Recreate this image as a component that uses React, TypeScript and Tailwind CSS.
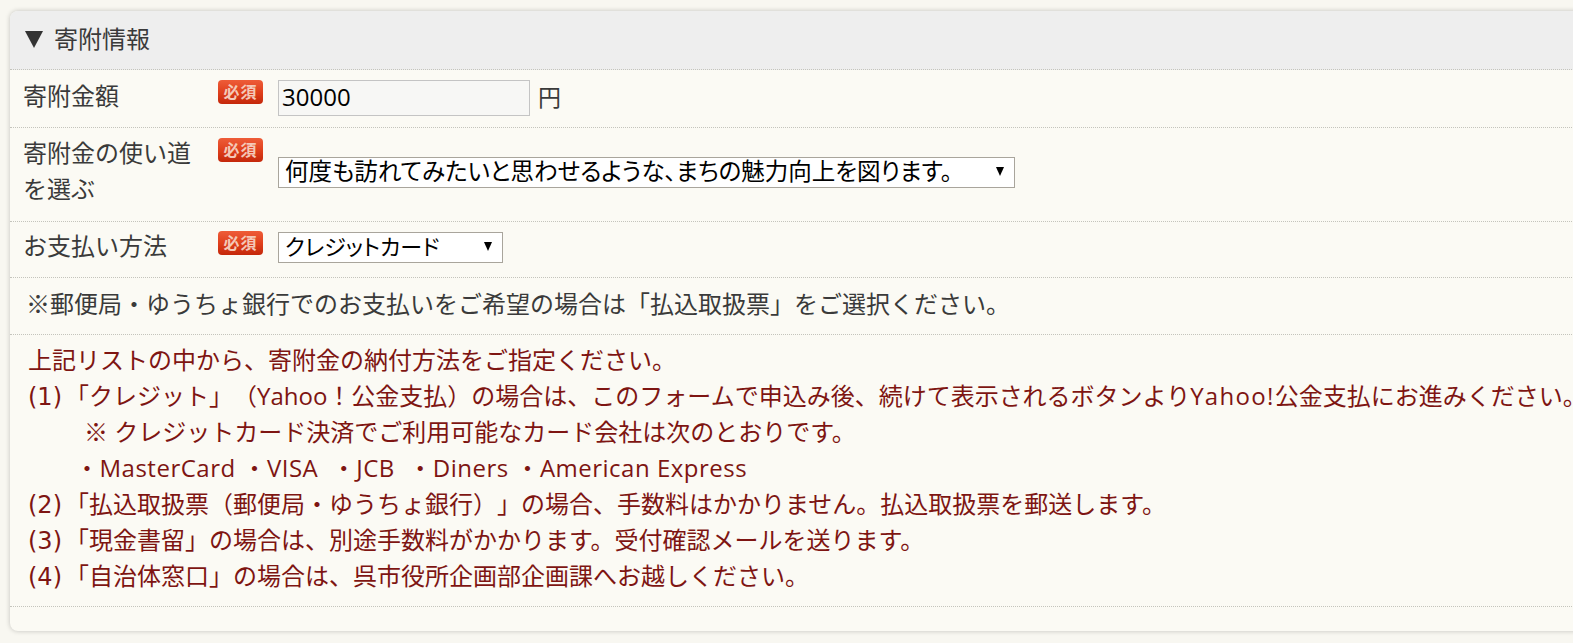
const font = { fontFamily: '"Open Sans", "Noto Sans CJK JP", sans-serif' };

const RequiredBadge = () => (
  <span className="flex h-[24px] w-[45px] items-center justify-center rounded-[4px] bg-gradient-to-b from-[#ee5c38] via-[#e0401c] to-[#c4270a] text-[16px] font-bold leading-none tracking-[1px] text-[#f4c8b8]">
    必須
  </span>
);

const SelectBox = ({ label, className }: { label: string; className: string }) => (
  <div className={`relative flex h-[31px] items-center border border-[#a9a59c] bg-white pb-[2px] pl-[6px] text-black [font-feature-settings:'palt'] ${className}`}>
    <span className="whitespace-nowrap">{label}</span>
    <span className="absolute right-[10px] top-[9px] h-0 w-0 border-x-[4.5px] border-t-[9px] border-x-transparent border-t-black" />
  </div>
);

const noteLines = [
  { num: '', text: '上記リストの中から、寄附金の納付方法をご指定ください。', className: 'pl-0' },
  { num: '(1)', text: '「クレジット」（Yahoo！公金支払）の場合は、このフォームで申込み後、続けて表示されるボタンより', latin: 'Yahoo!', rest: '公金支払にお進みください。', className: 'pl-0' },
  { num: '', text: '※ クレジットカード決済でご利用可能なカード会社は次のとおりです。', className: 'pl-[56px]' },
  { num: '', text: '・MasterCard ・VISA  ・JCB  ・Diners ・American Express', className: 'pl-[47px] tracking-[0.5px]' },
  { num: '(2)', text: '「払込取扱票（郵便局・ゆうちょ銀行）」の場合、手数料はかかりません。払込取扱票を郵送します。', className: 'pl-0' },
  { num: '(3)', text: '「現金書留」の場合は、別途手数料がかかります。受付確認メールを送ります。', className: 'pl-0' },
  { num: '(4)', text: '「自治体窓口」の場合は、呉市役所企画部企画課へお越しください。', className: 'pl-0' },
];

export default function App() {
  return (
    <div className="h-[643px] w-[1573px] overflow-hidden bg-[#f8f7f1] pl-[10px] pt-[11px] text-[#3a3a3a] [text-spacing-trim:space-all]" style={font}>
      <div className="h-[620px] w-[1600px] rounded-l-[8px] bg-[#fbfaf4] shadow-[0_0_5px_rgba(0,0,0,0.22)]">
        <div className="flex h-[59px] items-center gap-[11px] rounded-tl-[8px] border-b border-dotted border-[#c4c4bc] bg-[#eeeeee] pb-[2px] pl-[15px] text-[24px]">
          <span className="h-0 w-0 border-x-[9.5px] border-t-[17px] border-x-transparent border-t-[#333333]" />
          <span>寄附情報</span>
        </div>

        <div className="flex h-[58px] border-b border-dotted border-[#c4c4bc] pl-[13px]">
          <div className="w-[195px] pt-[8px] text-[24px]">寄附金額</div>
          <div className="pt-[10px]"><RequiredBadge /></div>
          <div className="ml-[15px] flex items-start gap-[8px] pt-[10px]">
            <div className="flex h-[36px] w-[252px] items-center border border-[#c4c4c4] bg-[#f7f7f5] pb-[2px] pl-[3px] text-[24px] text-black">30000</div>
            <span className="text-[23px]">円</span>
          </div>
        </div>

        <div className="flex h-[94px] border-b border-dotted border-[#c4c4bc] pl-[13px]">
          <div className="w-[195px] pt-[7px] text-[24px] leading-[36px]">寄附金の使い道<br />を選ぶ</div>
          <div className="pt-[10px]"><RequiredBadge /></div>
          <div className="ml-[15px] pt-[29px]">
            <SelectBox label="何度も訪れてみたいと思わせるような、まちの魅力向上を図ります。" className="w-[737px] text-[23.5px]" />
          </div>
        </div>

        <div className="flex h-[56px] border-b border-dotted border-[#c4c4bc] pl-[13px]">
          <div className="w-[195px] pt-[6px] text-[24px]">お支払い方法</div>
          <div className="pt-[9px]"><RequiredBadge /></div>
          <div className="ml-[15px] pt-[10px]">
            <SelectBox label="クレジットカード" className="w-[225px] text-[22px]" />
          </div>
        </div>

        <div className="flex h-[57px] items-center border-b border-dotted border-[#c4c4bc] pb-[5px] pl-[16px] text-[24px]">
          ※郵便局・ゆうちょ銀行でのお支払いをご希望の場合は「払込取扱票」をご選択ください。
        </div>

        <div className="h-[272px] border-b border-dotted border-[#c4c4bc] pl-[18px] pt-[7px] text-[24px] leading-[36px] text-[#7e1512]">
          {noteLines.map(line => (
            <div key={line.text} className={`h-[36px] whitespace-pre ${line.className}`}>
              {line.num && <span className="pr-[3px] font-['DejaVu_Sans'] leading-none">{line.num}</span>}
              {line.text}
              {line.latin && <span className="tracking-[1.3px]">{line.latin}</span>}
              {line.rest}
            </div>
          ))}
        </div>
      </div>
    </div>
  );
}
